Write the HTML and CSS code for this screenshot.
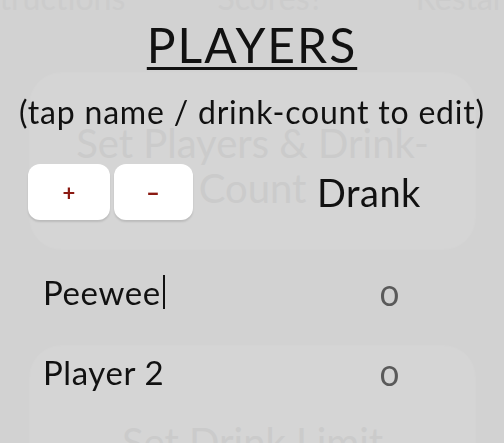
FILE: index.html
```html
<!DOCTYPE html>
<html>
<head>
<meta charset="utf-8">
<link rel="stylesheet" href="styles.css">
</head>
<body>
<div class="page">
  <nav class="nav">
    <span>Instructions</span>
    <span>Scores?</span>
    <span>Restart</span>
  </nav>
  <section class="card card-players">
    <h2 class="card-title">Set Players &amp; Drink-Count</h2>
  </section>
  <section class="card card-limit">
    <h2 class="card-title">Set Drink Limit</h2>
  </section>
</div>

<div class="overlay">
  <h1 class="title">PLAYERS</h1>
  <p class="hint">(tap name / drink-count to edit)</p>
  <div class="head-row">
    <div class="btns">
      <button class="btn">+</button>
      <button class="btn"><span class="minus">-</span></button>
    </div>
    <div class="drank">Drank</div>
  </div>
  <div class="player-row">
    <div class="name">Peewee<span class="caret"></span></div>
    <div class="count">0</div>
  </div>
  <div class="player-row">
    <div class="name">Player 2</div>
    <div class="count">0</div>
  </div>
</div>
</body>
</html>
```

FILE: styles.css
```css
* { box-sizing: border-box; }
html, body {
  margin: 0;
  padding: 0;
  width: 504px;
  height: 443px;
  overflow: hidden;
  background: #d2d2d2;
  font-family: "Lato", "Open Sans", sans-serif;
}
.page {
  padding: 0 28px 0 29px;
}
.nav {
  display: flex;
  justify-content: space-between;
  margin: -20px -40px 0 -70px;
  height: 36px;
  font-size: 32px;
  color: #cccccc;
  line-height: 36px;
}
.card {
  background: #d5d5d5;
  border-radius: 32px;
  border: 1px solid #d4d4d4;
  color: #cbcbcb;
  text-align: center;
}
.card-players {
  margin-top: 56px;
  height: 178px;
  padding-top: 48px;
}
.card-limit {
  margin-top: 95px;
  height: 200px;
  padding-top: 74px;
}
.card-title {
  margin: 0;
  font-weight: 400;
  font-size: 40px;
  line-height: 45px;
  padding: 0 12px;
}
.overlay {
  position: fixed;
  inset: 0;
  color: #111;
}
.title {
  margin: 17px 0 0;
  text-align: center;
  font-weight: 400;
  font-size: 48px;
  line-height: 56px;
  letter-spacing: 2px;
  text-decoration: underline;
  text-decoration-thickness: 3px;
  text-underline-offset: 4px;
}
.hint {
  margin: 19px 0 0;
  text-align: center;
  font-size: 32px;
  line-height: 40px;
  letter-spacing: 0.8px;
  white-space: nowrap;
}
.head-row {
  display: flex;
  align-items: center;
  margin: 32px 0 0 28px;
}
.btns {
  display: flex;
  gap: 4px;
}
.btn {
  width: 82px;
  height: 56px;
  border: none;
  border-radius: 12px;
  background: #fff;
  box-shadow: 0 2px 2px rgba(0,0,0,0.12);
  color: #8b1a12;
  font-family: inherit;
  font-size: 22px;
  font-weight: 700;
  padding: 0;
}
.btn + .btn { width: 79px; }
.minus {
  display: inline-block;
  transform: scaleX(1.7);
}
.drank {
  margin-left: 124px;
  font-size: 38px;
  line-height: 40px;
  letter-spacing: 0.5px;
}
.player-row {
  display: flex;
  align-items: center;
  height: 80px;
  padding-left: 43px;
}
.head-row + .player-row { margin-top: 32px; }
.name {
  width: 337px;
  font-size: 33px;
  line-height: 40px;
  letter-spacing: 0.6px;
  display: flex;
  align-items: center;
}
.caret {
  display: inline-block;
  width: 2px;
  height: 34px;
  background: #111;
  margin-left: 2px;
}
.count {
  font-size: 35px;
  color: #5a5a5a;
  font-variant-numeric: oldstyle-nums;
}
```
